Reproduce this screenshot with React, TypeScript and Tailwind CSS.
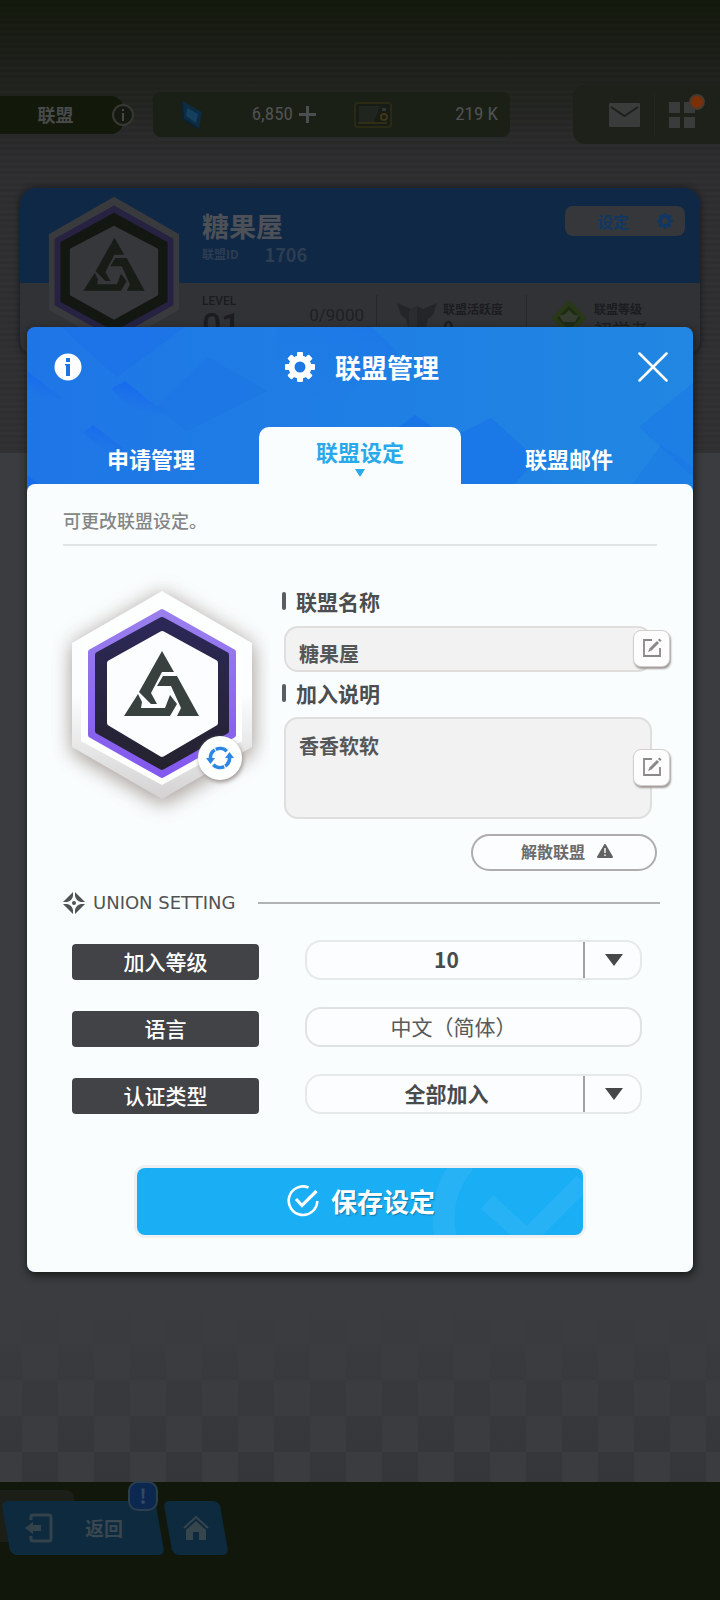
import { useState } from "react";

const HEX_BACK = "M112 21 L202 73 V177 L112 229 L22 177 V73 Z";

// Three interlocking bars forming the union's triangle mark.
function TriangleMark({ className }: { className?: string }) {
  return (
    <g className={className} fill="currentColor">
      <path d="M112 81 L124 102 H112 L101 123 L107 134 L101 134 L89 122 Z" />
      <path d="M113 106 H127 L149 146 H127 L131 138 L121 116 H107 Z" />
      <path d="M88 124 L92 132 L91 138 H115 L120 125 L127 134 L120 146 H74 Z" />
    </g>
  );
}

function Crest() {
  return (
    <svg viewBox="0 0 220 260" className="h-[260px] w-[220px] text-[#39413f]" aria-label="联盟徽章" role="img">
      <defs>
        <filter id="soft" x="-30%" y="-30%" width="160%" height="160%">
          <feGaussianBlur stdDeviation="10" />
        </filter>
        <linearGradient id="back" x1="0" y1="0" x2="0" y2="1">
          <stop offset="0.5" stopColor="#fbfdfe" />
          <stop offset="1" stopColor="#d4d2d2" />
        </linearGradient>
        <linearGradient id="violet" x1="0" y1="0" x2="0" y2="1">
          <stop offset="0" stopColor="#9a80ee" />
          <stop offset="1" stopColor="#8258ee" />
        </linearGradient>
        <linearGradient id="navy" x1="0" y1="0" x2="0" y2="1">
          <stop offset="0" stopColor="#2b2858" />
          <stop offset="1" stopColor="#25222f" />
        </linearGradient>
      </defs>
      <path d={HEX_BACK} fill="#7d6c62" opacity="0.35" filter="url(#soft)" />
      <path d={HEX_BACK} transform="translate(1 7)" fill="#6d5b52" opacity="0.4" filter="url(#soft)" />
      <path d={HEX_BACK} fill="url(#back)" />
      <path d="M112 22 L192 68 V171 L112 215 L31 171 V68 Z" fill="#fdfefe" />
      <g strokeLinejoin="round" strokeWidth="6">
        <path d="M112 42 L183 82 V165 L112 205 L41 165 V82 Z" fill="url(#violet)" stroke="url(#violet)" />
        <path d="M112 50 L176 85 V161 L112 197 L48 161 V85 Z" fill="url(#navy)" stroke="url(#navy)" />
        <path d="M112 64 L165 93 V153 L112 184 L60 153 V93 Z" fill="#fbfdfe" stroke="#fbfdfe" />
      </g>
      <TriangleMark />
    </svg>
  );
}

function DimCrest() {
  return (
    <svg viewBox="20 20 184 210" className="absolute top-2 left-[27px] h-[152px] w-[134px] text-[#171c17]" aria-hidden="true">
      <path d={HEX_BACK} fill="#393a3d" />
      <path d="M112 33 L194 79 V171 L112 217 L30 171 V79 Z" fill="#272142" />
      <path d="M112 43 L186 84 V166 L112 207 L38 166 V84 Z" fill="#121712" />
      <path d="M112 61 L173 93 V157 L112 191 L51 157 V93 Z" fill="#35373b" />
      <g transform="translate(-14 -14) scale(1.13)">
        <TriangleMark />
      </g>
    </svg>
  );
}

function Gear({ className }: { className?: string }) {
  return (
    <svg viewBox="0 0 30 30" className={className} aria-hidden="true">
      <g fill="currentColor">
        <rect x="12" y="0" width="6" height="30" rx="1" />
        <rect x="12" y="0" width="6" height="30" rx="1" transform="rotate(45 15 15)" />
        <rect x="12" y="0" width="6" height="30" rx="1" transform="rotate(90 15 15)" />
        <rect x="12" y="0" width="6" height="30" rx="1" transform="rotate(135 15 15)" />
      </g>
      <circle cx="15" cy="15" r="8.5" fill="none" stroke="currentColor" strokeWidth="6" />
      <circle cx="15" cy="15" r="5.5" className="fill-(--hole)" />
    </svg>
  );
}

function InfoIcon({ className }: { className?: string }) {
  return (
    <svg viewBox="0 0 28 28" className={className} aria-hidden="true">
      <circle cx="14" cy="14" r="13.5" fill="#fff" />
      <g fill="#1f74e0">
        <rect x="12" y="5" width="4" height="4" />
        <path d="M11 11 H16 V23 H12 V12.500 H11 Z" />
      </g>
    </svg>
  );
}

function EditButton({ label, className }: { label: string; className: string }) {
  return (
    <button
      type="button"
      aria-label={label}
      className={`absolute -right-[18px] flex size-[37px] items-center justify-center rounded-lg border border-[#d2cfcd] bg-[#fdfdfd] shadow-[1px_2px_2px_#a09a97] ${className}`}
    >
      <svg viewBox="0 0 20 20" className="size-5" fill="none" stroke="#8a8888" strokeWidth="1.8" aria-hidden="true">
        <path d="M10 2 H2 V18 H18 V10" />
        <path d="M8 12 L16 4" strokeWidth="3" />
        <path d="M17 3 L18.500 1.500" strokeWidth="3" />
        <path d="M6 14 L9 12.800 L7.200 11 Z" fill="#8a8888" stroke="none" />
      </svg>
    </button>
  );
}

function FieldLabel({ htmlFor, text }: { htmlFor: string; text: string }) {
  return (
    <label htmlFor={htmlFor} className="flex items-center gap-2.5 text-[21px] leading-7 font-bold text-[#4b4e4f]">
      <span className="h-[18px] w-1 rounded-xs bg-[#5a5d5f]" />
      {text}
    </label>
  );
}

function SettingLabel({ htmlFor, text }: { htmlFor: string; text: string }) {
  return (
    <label
      htmlFor={htmlFor}
      className="flex h-9 w-[187px] items-center justify-center rounded-sm bg-[#414346] pb-0.5 text-[21px] leading-7 font-medium text-white"
    >
      {text}
    </label>
  );
}

function SettingSelect({ id, options }: { id: string; options: string[] }) {
  const [value, setValue] = useState(options[0]);
  return (
    <div className="relative flex-1">
      <select
        id={id}
        value={value}
        onChange={(e) => setValue(e.target.value)}
        className="h-10 w-full appearance-none rounded-2xl border-2 border-[#e6e9ea] bg-[#fbfdfe] pr-[54px] pb-0.5 text-center text-[21px] leading-7 font-bold text-[#484b4c] [text-align-last:center]"
      >
        {options.map((o) => (
          <option key={o}>{o}</option>
        ))}
      </select>
      <span className="pointer-events-none absolute inset-y-0.5 right-0 flex w-[59px] items-center justify-center border-l-2 border-[#a0a2a3]">
        <svg viewBox="0 0 18 12" className="h-3 w-[18px]" fill="#454849" aria-hidden="true">
          <path d="M0 0 H18 L9 12 Z" />
        </svg>
      </span>
    </div>
  );
}

function TopBar() {
  return (
    <header className="flex items-center pt-[85px]">
      <div className="flex items-center">
        <h1 className="flex h-[38px] w-[123px] items-center justify-center rounded-r-xl bg-[#12180a] pr-3 text-[18px] font-bold text-[#484b4a]">
          联盟
        </h1>
        <svg viewBox="0 0 22 22" className="-ml-[11px] size-[22px]" aria-hidden="true">
          <circle cx="11" cy="11" r="10" fill="#151911" stroke="#363933" strokeWidth="2" />
          <path d="M10 5 h2 v2 h-2 Z M10 9 h2 v8 h-2 Z" fill="#464944" />
        </svg>
      </div>
      <div className="ml-[19px] flex h-[45px] flex-1 items-center rounded-lg bg-[#1b2017] pr-3 pl-7 font-['Liberation_Sans_Narrow','Roboto_Condensed',Roboto,sans-serif] text-[19px] text-[#4f5251]">
        <svg viewBox="0 0 22 30" className="h-[30px] w-[22px]" aria-hidden="true">
          <path d="M1 1 L21 12 L18 29 L2 19 Z" fill="#0d2c42" />
          <path d="M6 8 L17 14 L15 23 L5 16 Z" fill="#143f5e" />
          <path d="M1 1 L2 19 L18 29" fill="none" stroke="#0a2233" strokeWidth="2" />
        </svg>
        <span className="w-[90px] text-right">6,850</span>
        <svg viewBox="0 0 17 17" className="ml-1.5 size-[17px]" aria-hidden="true">
          <path d="M7 0 h3 v7 h7 v3 h-7 v7 h-3 v-7 H0 v-3 h7 Z" fill="#4b4e50" />
        </svg>
        <svg viewBox="0 0 38 26" className="ml-[38px] h-[26px] w-[38px]" aria-hidden="true">
          <rect x="1" y="1" width="36" height="24" rx="3" fill="#171c15" stroke="#2a2a14" strokeWidth="2" />
          <path d="M5 4 H26 L20 20 H5 Z" fill="#20251f" />
          <circle cx="30" cy="15" r="3" fill="none" stroke="#3e3615" strokeWidth="2" />
          <path d="M28 6 h4 v3 h-4 Z" fill="#313735" />
          <path d="M4 21 H33" stroke="#4a411b" />
        </svg>
        <span className="flex-1 text-right">219 K</span>
      </div>
      <div className="ml-[63px] flex h-[59px] w-[147px] items-center rounded-l-xl bg-[#1d211a] pl-9">
        <button type="button" aria-label="邮件">
          <svg viewBox="0 0 31 24" className="h-6 w-[31px]" aria-hidden="true">
            <rect width="31" height="24" rx="1" fill="#393c3a" />
            <path d="M2 4 L15.500 13 L29 4" fill="none" stroke="#1d211a" strokeWidth="2" />
          </svg>
        </button>
        <span className="mx-3.5 h-11 w-px bg-[#23271f]" />
        <button type="button" aria-label="菜单" className="relative">
          <svg viewBox="0 0 26 26" className="size-[26px]" fill="#393c3a" aria-hidden="true">
            <path d="M0 0 h11 v11 h-11 Z M15 0 h11 v11 h-11 Z M0 15 h11 v11 h-11 Z M15 15 h11 v11 h-11 Z" />
          </svg>
          <span className="absolute -top-2 -right-2.5 size-4 rounded-full border-2 border-[#433a30] bg-[#7d2f08]" />
        </button>
      </div>
    </header>
  );
}

function UnionCard() {
  return (
    <section className="relative mx-5 mt-11 h-[168px] overflow-hidden rounded-2xl bg-[#313236] shadow-[0_0_6px_#15161a]">
      <div className="flex h-[95px] items-start justify-between bg-[#0f2846] pr-[15px] pl-[182px]">
        <div className="pt-5 text-[#4a5462]">
          <h2 className="text-[27px] leading-9 font-bold text-[#4d5157]">糖果屋</h2>
          <p className="flex items-center gap-[26px] leading-5 font-bold text-[#2d3d52]">
            <span className="text-[12px]">联盟ID</span>
            <span className="text-[18px]">1706</span>
          </p>
        </div>
        <button
          type="button"
          className="mt-[18px] flex h-[30px] w-[120px] items-center justify-end gap-7 rounded-lg bg-[#36373a] pr-3 text-[16px] font-bold text-[#113863] [--hole:#36373a]"
        >
          设定
          <Gear className="size-4" />
        </button>
      </div>
      <DimCrest />
      <div className="flex pl-[182px] font-bold text-[#1b1c1f]">
        <div className="flex w-[174px] justify-between pt-2.5 pr-3">
          <p className="font-['Roboto',sans-serif] text-[12px] leading-4 font-medium">
            LEVEL
            <span className="block text-[34px] leading-8 font-medium">01</span>
          </p>
          <p className="pt-3 font-['Roboto',sans-serif] text-[17px] leading-5 font-normal text-[#1f2023]">0/9000</p>
        </div>
        <div className="mt-3 flex w-[150px] gap-1.5 border-l border-[#27282b] pt-1.5 pl-5">
          <svg viewBox="0 0 40 34" className="h-[34px] w-10" aria-hidden="true">
            <path d="M0 2 L14 8 L20 5 L26 8 L40 2 L36 14 L31 18 L28 30 L20 34 L12 30 L9 18 L4 14 Z" fill="#232529" />
            <path d="M20 5 V34 L12 29 V10 Z" fill="#2a2c30" />
          </svg>
          <p className="text-[12px] leading-4">
            联盟活跃度
            <span className="block text-[18px] leading-5">0</span>
          </p>
        </div>
        <div className="mt-3 flex gap-2 border-l border-[#27282b] pt-1.5 pl-[25px]">
          <svg viewBox="0 0 34 34" className="size-[34px]" aria-hidden="true">
            <path d="M17 2 L32 17 L17 32 L2 17 Z" fill="#1f2c14" stroke="#293817" strokeWidth="4" />
            <path d="M17 9 L22 14 H27 L23 21 H11 L7 14 H12 Z" fill="#363d30" />
          </svg>
          <p className="text-[12px] leading-4">
            联盟等级
            <span className="block text-[18px] leading-6 font-normal">初学者</span>
          </p>
        </div>
      </div>
    </section>
  );
}

function BottomNav() {
  return (
    <nav className="relative isolate flex h-[118px] items-start gap-2 bg-[#11180b] pt-[19px] pl-1.5">
      <span className="absolute top-2 left-0 -z-10 h-[52px] w-[74px] rounded-tr-lg bg-[#1b1f17]" />
      <button type="button" className="relative isolate flex h-[54px] w-[154px] items-center gap-8 pl-[19px] text-[19px] font-bold text-[#394750]">
        <span className="absolute inset-0 -z-10 skew-x-[10deg] rounded-md bg-[#0e2a3f]" />
        <svg viewBox="0 0 28 30" className="h-[30px] w-7" fill="none" stroke="#34434b" strokeWidth="3" aria-hidden="true">
          <path d="M6 7 V4 Q6 2 8 2 H24 Q26 2 26 4 V26 Q26 28 24 28 H8 Q6 28 6 26 V23" />
          <path d="M0 15 L8 9 V12 H16 V18 H8 V21 Z" fill="#34434b" stroke="none" />
        </svg>
        返回
        <span className="absolute -top-5 right-0.5 flex size-[30px] items-center justify-center rounded-[10px] border-2 border-[#2c3f4e] bg-[#0d2850] text-[20px] leading-5 text-[#35495f]">
          !
        </span>
      </button>
      <button type="button" aria-label="主页" className="relative isolate flex h-[54px] w-[56px] items-center justify-center">
        <span className="absolute inset-0 -z-10 skew-x-[10deg] rounded-md bg-[#0e2a3f]" />
        <svg viewBox="0 0 26 26" className="size-[26px]" aria-hidden="true">
          <path d="M13 6 L23 15 V25 H16 V17 H10 V25 H3 V15 Z" fill="#37454d" />
          <path d="M1 13 L13 2 L25 13" fill="none" stroke="#37454d" strokeWidth="2" />
        </svg>
      </button>
    </nav>
  );
}

function HeaderFacets() {
  return (
    <svg viewBox="0 0 666 165" preserveAspectRatio="none" className="absolute inset-x-0 top-0 h-[165px] w-full" aria-hidden="true">
      <defs>
        <linearGradient id="facet" x1="0" y1="1" x2="1" y2="0">
          <stop offset="0" stopColor="#1e7ee6" stopOpacity="0" />
          <stop offset="1" stopColor="#1460f0" stopOpacity="0.7" />
        </linearGradient>
        <linearGradient id="streak" x1="0.3" y1="1" x2="0.7" y2="0">
          <stop offset="0.2" stopColor="#1764f0" stopOpacity="0" />
          <stop offset="1" stopColor="#1062f4" stopOpacity="0.8" />
        </linearGradient>
      </defs>
      <path d="M0 44 L36 72 L0 78 Z" fill="url(#streak)" />
      <path d="M98 54 L138 86 L112 90 L84 62 Z" fill="url(#streak)" />
      <path d="M66 98 L100 124 L84 130 L56 106 Z" fill="url(#streak)" opacity="0.8" />
      <path d="M0 148 L22 165 H0 Z" fill="#1466ee" opacity="0.6" />
      <path d="M34 0 H158 L90 50 Z" fill="#1a70ea" opacity="0.5" />
      <path d="M250 0 H345 L372 26 L310 76 L250 60 Z" fill="url(#facet)" opacity="0.4" />
      <path d="M180 30 L240 64 L160 104 L130 80 Z" fill="#1c74e4" opacity="0.5" />
      <path d="M434 106 L464 91 L510 132 L480 165 H434 Z" fill="#1873e8" opacity="0.7" />
      <path d="M666 56 L612 100 L666 150 Z" fill="#1a7ae6" opacity="0.6" />
      <path d="M634 118 L666 140 V165 H600 Z" fill="#1874e8" opacity="0.4" />
      <path d="M388 88 L412 104 H366 Z" fill="#166ce8" opacity="0.6" />
    </svg>
  );
}

function ManageDialog() {
  const [name, setName] = useState("糖果屋");
  const [intro, setIntro] = useState("香香软软");

  return (
    <div
      role="dialog"
      aria-labelledby="dialog-title"
      className="relative w-full overflow-hidden rounded-lg bg-linear-to-r from-[#1e76e6] to-[#2187e2] shadow-[1px_3px_8px_#151715]"
    >
      <HeaderFacets />
      <div className="relative grid h-[84px] grid-cols-[1fr_auto_1fr] items-center pr-[25px] pb-1 pl-[27px]">
        <button type="button" aria-label="说明" className="justify-self-start">
          <InfoIcon className="size-7" />
        </button>
        <h2 id="dialog-title" className="flex items-center gap-5 pl-0.5 text-[26px] leading-9 font-bold text-white [--hole:#1e78e4]">
          <Gear className="size-[30px]" />
          联盟管理
        </h2>
        <button type="button" aria-label="关闭" className="justify-self-end">
          <svg viewBox="0 0 30 30" className="size-[30px]" fill="none" stroke="#fff" strokeWidth="2.500" strokeLinecap="round" aria-hidden="true">
            <path d="M1.500 1.500 L28.500 28.500 M28.500 1.500 L1.500 28.500" />
          </svg>
        </button>
      </div>

      <div role="tablist" className="relative grid h-[73px] grid-cols-[1fr_202px_1fr] items-end text-[22px] leading-6 font-bold text-white">
        <button type="button" role="tab" aria-selected="false" className="h-[46px] pb-1.5 pl-4">
          申请管理
        </button>
        <button
          type="button"
          role="tab"
          aria-selected="true"
          className="flex h-[57px] flex-col items-center gap-1.5 rounded-t-[10px] bg-[#fafdfe] pt-3 text-[#2aa9ea]"
        >
          联盟设定
          <svg viewBox="0 0 10 8" className="h-2 w-2.5" fill="currentColor" aria-hidden="true">
            <path d="M0 0 H10 L5 8 Z" />
          </svg>
        </button>
        <button type="button" role="tab" aria-selected="false" className="h-[46px] pr-4 pb-1.5">
          联盟邮件
        </button>
      </div>

      <div role="tabpanel" className="relative rounded-t-lg bg-[#fafdfe] px-9 pt-6 pb-[37px]">
        <p className="border-b-2 border-[#e2e5e6] pb-3 text-[18px] leading-6 font-medium text-[#858686]">可更改联盟设定。</p>

        <div className="mt-6 -ml-[13px] flex gap-3">
          <div className="relative h-[260px] w-[220px] shrink-0">
            <Crest />
            <button
              type="button"
              aria-label="更换徽章"
              className="absolute top-[166px] left-[148px] flex size-11 items-center justify-center rounded-full bg-[#fdfefe] shadow-[1px_2px_4px_#9a9290]"
            >
              <svg viewBox="0 0 28 24" className="h-6 w-7" aria-hidden="true">
                <g fill="none" stroke="#2c86e4" strokeWidth="3.500">
                  <path d="M4.500 13 A9.500 9.500 0 0 1 8.800 3.900" />
                  <path d="M9.800 3.400 A9.500 9.500 0 0 1 20.800 5.300" />
                  <path d="M23.500 11 A9.500 9.500 0 0 1 19.200 20.100" />
                  <path d="M18.200 20.600 A9.500 9.500 0 0 1 7.200 18.700" />
                </g>
                <path d="M0 12 H9 L4.500 18 Z M19 12 H28 L23.500 6 Z" fill="#2c86e4" />
              </svg>
            </button>
          </div>

          <div className="flex flex-1 flex-col pt-[17px]">
            <FieldLabel htmlFor="union-name" text="联盟名称" />
            <div className="relative mt-[11px] mr-[5px] ml-0.5">
              <input
                id="union-name"
                value={name}
                onChange={(e) => setName(e.target.value)}
                className="block h-[46px] w-full rounded-[14px] border-2 border-[#e0dedd] bg-[#f2f2f2] pt-2.5 pr-6 pl-[13px] text-[20px] leading-7 font-bold text-[#545657]"
              />
              <EditButton label="编辑联盟名称" className="top-1" />
            </div>
            <div className="mt-[7px]">
              <FieldLabel htmlFor="union-intro" text="加入说明" />
            </div>
            <div className="relative mt-2.5 mr-[5px] ml-0.5">
              <textarea
                id="union-intro"
                value={intro}
                onChange={(e) => setIntro(e.target.value)}
                className="block h-[102px] w-full resize-none rounded-[14px] border-2 border-[#e0dedd] bg-[#f2f2f2] pt-[13px] pr-6 pl-[13px] text-[20px] leading-7 font-bold text-[#545657]"
              />
              <EditButton label="编辑加入说明" className="top-8" />
            </div>
            <button
              type="button"
              className="mt-[15px] flex h-[37px] w-[186px] items-center justify-center gap-3 self-end rounded-full border-2 border-[#aeacac] bg-[#fbfdfe] pb-0.5 pl-1.5 text-[16px] font-bold text-[#6b6b6b]"
            >
              解散联盟
              <svg viewBox="0 0 16 14" className="h-3.5 w-4" aria-hidden="true">
                <path d="M8 1 L15 13 H1 Z" fill="#626262" stroke="#626262" strokeWidth="2" strokeLinejoin="round" />
                <path d="M8 4 V9 M8 10.500 V12" stroke="#fff" strokeWidth="1.400" />
              </svg>
            </button>
          </div>
        </div>

        <div className="mt-5 -mr-[3px] flex h-6 items-center gap-2">
          <svg viewBox="0 0 22 22" className="size-[22px]" fill="#505354" aria-hidden="true">
            <path d="M10 0 V4 Q9 9 4 10 H0 Z M12 0 V4 Q13 9 18 10 H22 Z M10 22 V18 Q9 13 4 12 H0 Z M12 22 V18 Q13 13 18 12 H22 Z" />
            <circle cx="11" cy="11" r="2" />
          </svg>
          <h3 className="font-['DejaVu_Sans',sans-serif] text-[18px] leading-6 text-[#505354]">UNION SETTING</h3>
          <span className="ml-3.5 h-0.5 flex-1 bg-[#b0b2b3]" />
        </div>

        <div className="mt-[25px] flex flex-col gap-[27px] pr-[15px] pl-[9px]">
          <div className="flex items-end gap-[46px]">
            <SettingLabel htmlFor="join-level" text="加入等级" />
            <SettingSelect id="join-level" options={["10", "20", "30"]} />
          </div>
          <div className="flex items-end gap-[46px]">
            <SettingLabel htmlFor="language" text="语言" />
            <input
              id="language"
              readOnly
              value="中文（简体）"
              className="h-10 w-0 flex-1 rounded-2xl border-2 border-[#e0e3e4] bg-[#fbfdfe] pr-10 pb-0.5 text-center text-[21px] leading-7 text-[#58595a]"
            />
          </div>
          <div className="flex items-end gap-[46px]">
            <SettingLabel htmlFor="approval" text="认证类型" />
            <SettingSelect id="approval" options={["全部加入", "需要审批"]} />
          </div>
        </div>

        <div className="mt-[54px] px-[74px]">
          <button
            type="button"
            className="relative flex h-[67px] w-full items-center justify-center gap-3 overflow-hidden rounded-lg bg-[#1aaef4] pl-0.5 text-[26px] font-bold text-white shadow-[0_0_0_3px_#eef0f1] text-shadow-[1px_1px_1px_#1478aa]"
          >
            <svg viewBox="0 0 150 67" className="absolute top-0 right-0 h-[67px] w-[150px]" fill="none" stroke="#26b2f5" strokeWidth="22" aria-hidden="true">
              <path d="M32 -6 A84 84 0 0 0 13 70" />
              <path d="M54 34 L94 70 L150 14" strokeWidth="18" />
            </svg>
            <svg viewBox="0 0 32 32" className="relative size-8" fill="none" stroke="#fff" strokeWidth="2.600" aria-hidden="true">
              <path d="M21.500 2.500 A14.300 14.300 0 1 0 30.300 16" />
              <path d="M9 14 L15 20.500 L29.500 6" strokeWidth="3.200" />
            </svg>
            <span className="relative pb-0.5">保存设定</span>
          </button>
        </div>
      </div>
    </div>
  );
}

export default function App() {
  return (
    <div
      lang="zh-CN"
      className="relative flex min-h-screen flex-col overflow-hidden bg-[#3a3c3f] font-['Noto_Sans_CJK_SC','Noto_Sans',sans-serif]"
    >
      <div className="h-[453px] bg-[repeating-linear-gradient(to_bottom,#ffffff02_0_3px,#00000005_3px_6px),linear-gradient(to_bottom,#12180b_0,#1b1e17_50px,#222420_100px,#2e2e31_170px,#303033_453px)]">
        <TopBar />
        <UnionCard />
      </div>
      <div className="flex-1" />
      <div className="h-[180px] bg-[repeating-conic-gradient(#353639_0_25%,#3b3c40_0_50%)] bg-size-[72px_72px] bg-position-[22px_42px]">
        <div className="h-full bg-linear-to-b from-[#3a3c3f] to-transparent" />
      </div>
      <BottomNav />
      <div className="absolute inset-0 flex items-center px-[27px] pb-0.5">
        <ManageDialog />
      </div>
    </div>
  );
}
